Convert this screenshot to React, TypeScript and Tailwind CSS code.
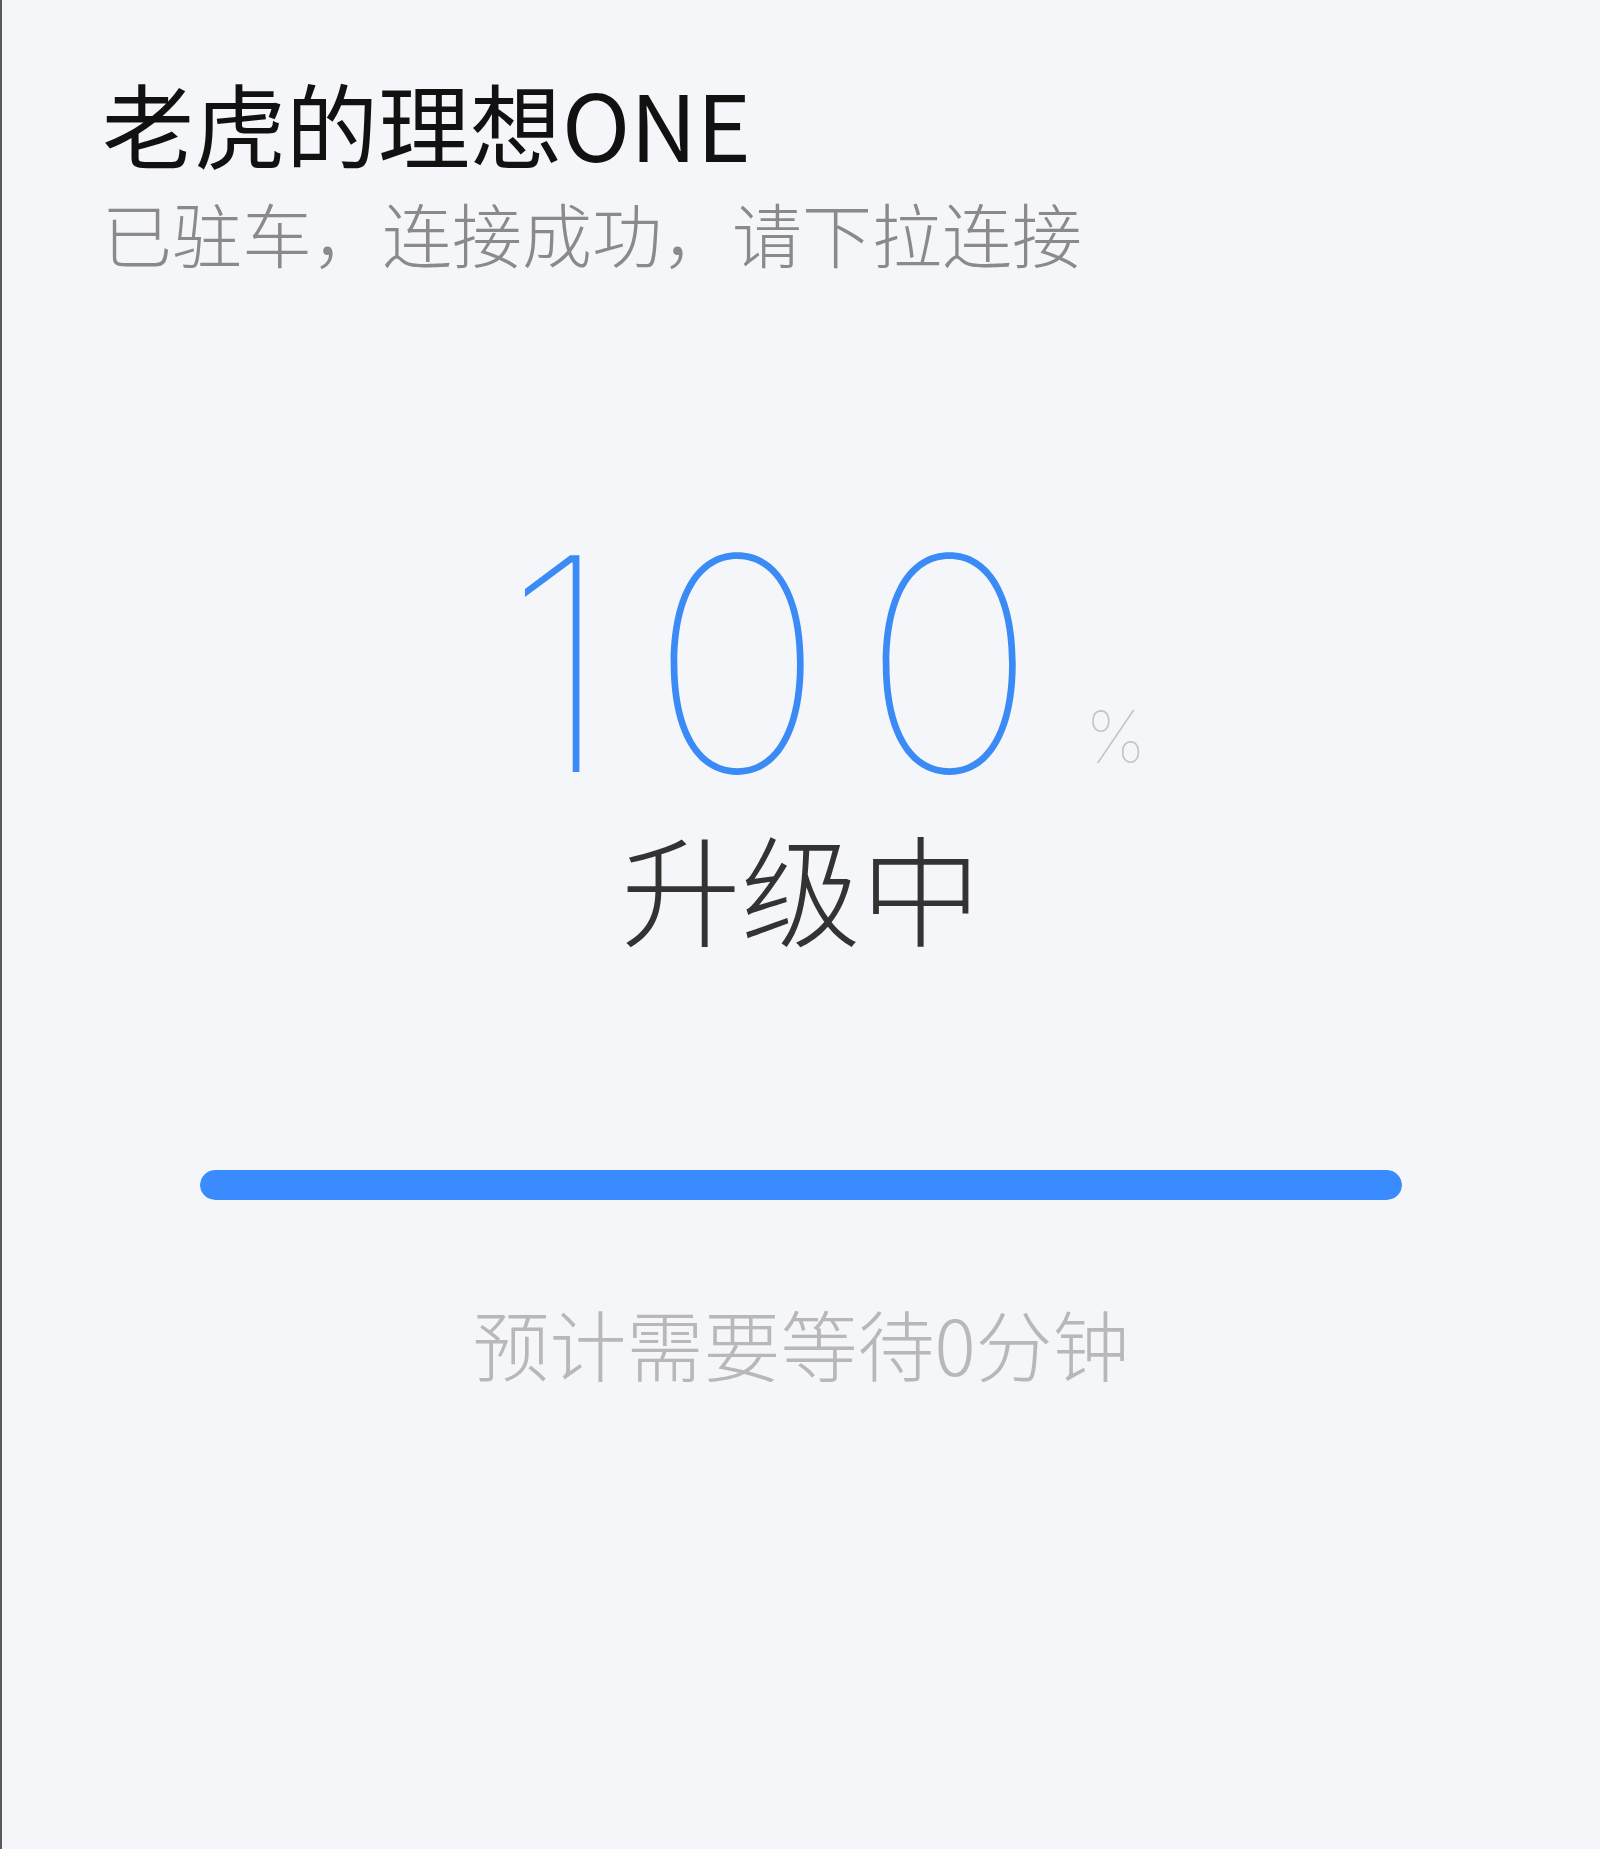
export default function App() {
  const progress = 100;

  return (
    <div className="h-[1849px] w-full bg-[#f5f6fa] border-l-2 border-[#5a5a5a] flex flex-col font-['Noto_Sans_CJK_SC',sans-serif]">
      {/* vehicle header */}
      <div className="pl-[100px] pt-[72px]">
        <h1 className="text-[92px] leading-[100px] text-[#111] font-normal">老虎的理想ONE</h1>
        <p className="mt-[16px] text-[70px] leading-[90px] text-[#8a8a8a] font-extralight">
          已驻车，连接成功，请下拉连接
        </p>
      </div>

      {/* upgrade status */}
      <div className="flex flex-col items-center mt-[236px]">
        <div className="flex items-end pl-[48px]">
          <span className="font-['Inter',sans-serif] font-thin text-[298px] leading-[300px] tracking-[36px] text-[#3a8bf6]">
            {progress}
          </span>
          <span className="ml-[12px] font-['Inter',sans-serif] font-thin text-[72px] leading-[70px] text-[#c4c4c4] mb-[42px]">%</span>
        </div>
        <div className="mt-[2px] text-[120px] leading-[140px] text-[#333] font-light">升级中</div>

        <div className="mt-[214px] w-[1202px] h-[30px] rounded-full bg-[#e4e8ef] overflow-hidden">
          <div className="h-full rounded-full bg-[#3a8bfd]" style={{ width: `${progress}%` }} />
        </div>

        <div className="mt-[98px] text-[77px] leading-[90px] text-[#b8b8b8] font-extralight">
          预计需要等待0分钟
        </div>
      </div>
    </div>
  );
}
